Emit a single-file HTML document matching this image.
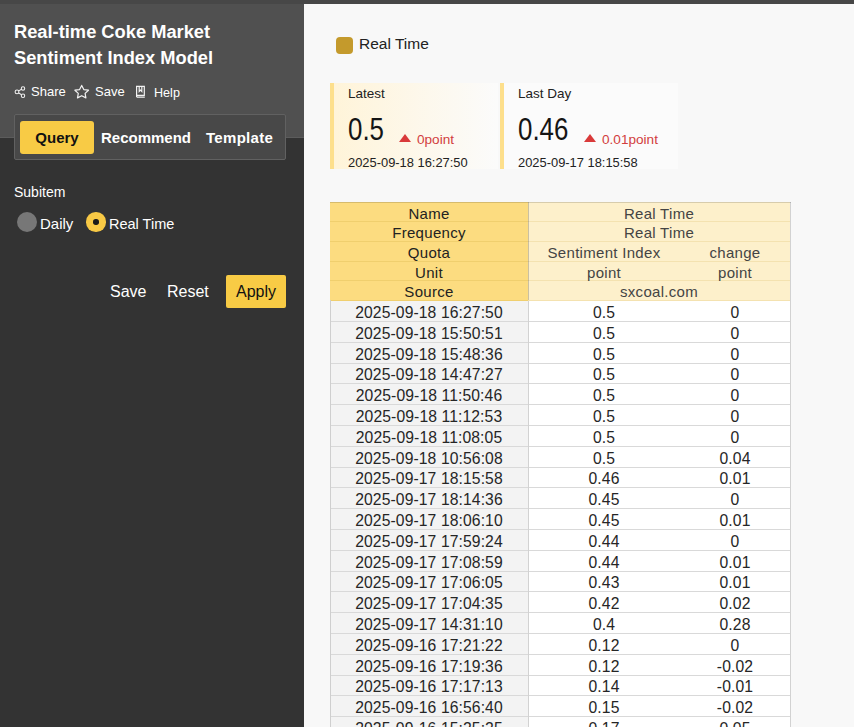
<!DOCTYPE html>
<html><head><meta charset="utf-8">
<style>
*{box-sizing:border-box;margin:0;padding:0}
html,body{width:854px;height:727px;overflow:hidden;background:#f8f8f8;font-family:"Liberation Sans",sans-serif}
#topbar{position:absolute;left:0;top:0;width:854px;height:4px;background:#474747;z-index:5}
#left{position:absolute;left:0;top:0;width:304px;height:727px;background:#333333}
#lhead{position:absolute;left:0;top:0;width:304px;height:138px;background:#505050;border-bottom:1px solid #5c5c5c}
.title{position:absolute;left:14px;top:19px;color:#fff;font-size:18.3px;font-weight:bold;line-height:26px;letter-spacing:0px}
.act{color:#fff;font-size:13px}
.acts{position:absolute;left:14px;top:84px;color:#fff;font-size:13px}
.acts span{position:absolute;white-space:nowrap}
#tabs{position:absolute;left:14px;top:114px;width:272px;height:46px;background:#484848;border:1px solid #616161;border-radius:2px}
.tab{position:absolute;top:6px;height:33px;line-height:33px;font-size:15px;font-weight:bold;color:#fff;white-space:nowrap}
.tab.q{left:5px;width:74px;background:#f8cb45;border-radius:3px;color:#111;text-align:center}
.lbl{position:absolute;color:#fff;font-size:14px;white-space:nowrap}
.btn{position:absolute;color:#fff;font-size:16px;white-space:nowrap}
.abs{position:absolute;white-space:nowrap}
.card{position:absolute;top:83px;height:86px;border-left:4px solid #fddf8c}
.c{position:absolute;text-align:center;white-space:nowrap;overflow:hidden}
.hl{position:absolute;background:#fcdc80}
.hr{position:absolute;background:#fdf0cb}
.dl{position:absolute;background:#f3f3f3}
.dr{position:absolute;background:#fff}
.hc{font-size:15px;letter-spacing:0.3px;color:#222;padding-top:1px}
.hc2{font-size:15px;letter-spacing:0.3px;color:#444;padding-top:1px}
.dc{font-size:15.7px;letter-spacing:0.1px;color:#262626;padding-top:0px}
.gl{position:absolute;height:1px}
.hlL{background:#f0cf6e}
.hlR{background:#f4e2b0}
.dg{background:#d9d9d9}
.vl{position:absolute;width:1px}

</style></head><body>
<div id="left">
  <div id="lhead">
    <div class="title">Real-time Coke Market<br>Sentiment Index Model</div>
    <svg class="abs" style="left:0;top:0" width="200" height="110" viewBox="0 0 200 110">
      <g fill="none" stroke="#f2f2f2" stroke-width="1.2">
        <circle cx="17" cy="91.9" r="1.9" stroke-width="1.05"/>
        <circle cx="23" cy="88.4" r="1.7" stroke-width="1.05"/>
        <circle cx="23" cy="95.7" r="1.7" stroke-width="1.05"/>
        <path d="M18.7 90.9 L21.5 89.3 M18.7 92.9 L21.5 94.7" stroke-width="1.05"/>
        <path d="M81.7 85.4 L83.8 89.6 L88.5 90.2 L85.1 93.4 L85.9 97.9 L81.7 95.7 L77.5 97.9 L78.3 93.4 L74.9 90.2 L79.6 89.6 Z" stroke-linejoin="round"/>
        <path d="M136.6 97.2 L144.8 97.2 M136.6 97 L136.6 86.3 L144.3 86.3 L144.3 95.3 L136.6 95.3 M139.2 86.5 L139.2 91.5 L140.5 90.2 L141.8 91.5 L141.8 86.5"/>
      </g>
    </svg>
    <div class="abs act" style="left:31px;top:84px">Share</div>
    <div class="abs act" style="left:95px;top:84px">Save</div>
    <div class="abs act" style="left:154px;top:85.5px;font-size:12.6px">Help</div>
  </div>
  <div id="tabs">
    <div class="tab q">Query</div>
    <div class="tab" style="left:86px">Recommend</div>
    <div class="tab" style="left:191px;letter-spacing:0.3px">Template</div>
  </div>
  <div class="lbl" style="left:14px;top:184px">Subitem</div>
  <div class="abs" style="left:17px;top:212px;width:20px;height:20px;border-radius:50%;background:#777"></div>
  <div class="abs" style="left:86px;top:212px;width:19.5px;height:19.5px;border-radius:50%;background:#f8c945"></div>
  <div class="abs" style="left:93px;top:219px;width:5.5px;height:5.5px;border-radius:50%;background:#1a1a1a"></div>
  <div class="lbl" style="left:40px;top:215px;font-size:15px">Daily</div>
  <div class="lbl" style="left:109px;top:216px;font-size:14.5px">Real Time</div>
  <div class="btn" style="left:110px;top:283px">Save</div>
  <div class="btn" style="left:167px;top:283px">Reset</div>
  <div class="btn" style="left:226px;top:275px;width:60px;height:33px;line-height:33px;background:#f8cb45;color:#111;text-align:center;border-radius:2px">Apply</div>
</div>

<div class="abs" style="left:335.5px;top:36.5px;width:17.5px;height:17.5px;background:#c49a2c;border-radius:4px"></div>
<div class="abs" style="left:359px;top:34.5px;font-size:15.5px;color:#222">Real Time</div>
<div class="card" style="left:330px;width:168px;background:linear-gradient(90deg,#fff4d9,#fbfbfb)">
  <div class="abs" style="left:14px;top:3px;font-size:13.5px;color:#222">Latest</div>
  <div class="abs" style="left:14px;top:29px;font-size:31px;color:#151515;transform:scaleX(0.835);transform-origin:0 0">0.5</div>
  <div class="abs" style="left:65px;top:51px;width:0;height:0;border-left:6px solid transparent;border-right:6px solid transparent;border-bottom:8px solid #d93a3a"></div>
  <div class="abs" style="left:83px;top:49px;font-size:13.6px;color:#d23e3e">0point</div>
  <div class="abs" style="left:14px;top:72px;font-size:12.9px;color:#222">2025-09-18 16:27:50</div>
</div>
<div class="card" style="left:500px;width:178px;background:#fbfbfb">
  <div class="abs" style="left:14px;top:3px;font-size:13.5px;color:#222">Last Day</div>
  <div class="abs" style="left:14px;top:29px;font-size:31px;color:#151515;transform:scaleX(0.835);transform-origin:0 0">0.46</div>
  <div class="abs" style="left:80px;top:51px;width:0;height:0;border-left:6px solid transparent;border-right:6px solid transparent;border-bottom:8px solid #d93a3a"></div>
  <div class="abs" style="left:98px;top:49px;font-size:13.6px;color:#d23e3e">0.01point</div>
  <div class="abs" style="left:14px;top:72px;font-size:12.9px;color:#222">2025-09-17 18:15:58</div>
</div>

<div class="hl" style="left:330px;top:202px;width:198px;height:98px"></div>
<div class="hr" style="left:528px;top:202px;width:262px;height:98px"></div>
<div class="dl" style="left:330px;top:300px;width:198px;height:427px"></div>
<div class="dr" style="left:528px;top:300px;width:262px;height:427px"></div>
<div class="gl hlL" style="left:330px;top:221px;width:198px"></div>
<div class="gl hlR" style="left:528px;top:221px;width:262px"></div>
<div class="c hc" style="left:330px;top:203.00px;width:198px;height:19px;line-height:19px">Name</div>
<div class="c hc2" style="left:528px;top:203.00px;width:262px;height:19px;line-height:19px">Real Time</div>
<div class="gl hlL" style="left:330px;top:241px;width:198px"></div>
<div class="gl hlR" style="left:528px;top:241px;width:262px"></div>
<div class="c hc" style="left:330px;top:222.00px;width:198px;height:20px;line-height:20px">Frequency</div>
<div class="c hc2" style="left:528px;top:222.00px;width:262px;height:20px;line-height:20px">Real Time</div>
<div class="gl hlL" style="left:330px;top:261px;width:198px"></div>
<div class="gl hlR" style="left:528px;top:261px;width:262px"></div>
<div class="c hc" style="left:330px;top:242.00px;width:198px;height:20px;line-height:20px">Quota</div>
<div class="c hc2" style="left:528px;top:242.00px;width:152px;height:20px;line-height:20px">Sentiment Index</div>
<div class="c hc2" style="left:680px;top:242.00px;width:110px;height:20px;line-height:20px">change</div>
<div class="gl hlL" style="left:330px;top:280px;width:198px"></div>
<div class="gl hlR" style="left:528px;top:280px;width:262px"></div>
<div class="c hc" style="left:330px;top:262.00px;width:198px;height:19px;line-height:19px">Unit</div>
<div class="c hc2" style="left:528px;top:262.00px;width:152px;height:19px;line-height:19px">point</div>
<div class="c hc2" style="left:680px;top:262.00px;width:110px;height:19px;line-height:19px">point</div>
<div class="gl hlL" style="left:330px;top:300px;width:198px"></div>
<div class="gl hlR" style="left:528px;top:300px;width:262px"></div>
<div class="c hc" style="left:330px;top:281.00px;width:198px;height:20px;line-height:20px">Source</div>
<div class="c hc2" style="left:528px;top:281.00px;width:262px;height:20px;line-height:20px">sxcoal.com</div>
<div class="gl dg" style="left:330px;top:321px;width:460px"></div>
<div class="c dc" style="left:330px;top:301.50px;width:198px;height:21px;line-height:21px">2025-09-18 16:27:50</div>
<div class="c dc" style="left:528px;top:301.50px;width:152px;height:21px;line-height:21px">0.5</div>
<div class="c dc" style="left:680px;top:301.50px;width:110px;height:21px;line-height:21px">0</div>
<div class="gl dg" style="left:330px;top:342px;width:460px"></div>
<div class="c dc" style="left:330px;top:322.50px;width:198px;height:21px;line-height:21px">2025-09-18 15:50:51</div>
<div class="c dc" style="left:528px;top:322.50px;width:152px;height:21px;line-height:21px">0.5</div>
<div class="c dc" style="left:680px;top:322.50px;width:110px;height:21px;line-height:21px">0</div>
<div class="gl dg" style="left:330px;top:363px;width:460px"></div>
<div class="c dc" style="left:330px;top:343.50px;width:198px;height:21px;line-height:21px">2025-09-18 15:48:36</div>
<div class="c dc" style="left:528px;top:343.50px;width:152px;height:21px;line-height:21px">0.5</div>
<div class="c dc" style="left:680px;top:343.50px;width:110px;height:21px;line-height:21px">0</div>
<div class="gl dg" style="left:330px;top:383px;width:460px"></div>
<div class="c dc" style="left:330px;top:364.50px;width:198px;height:20px;line-height:20px">2025-09-18 14:47:27</div>
<div class="c dc" style="left:528px;top:364.50px;width:152px;height:20px;line-height:20px">0.5</div>
<div class="c dc" style="left:680px;top:364.50px;width:110px;height:20px;line-height:20px">0</div>
<div class="gl dg" style="left:330px;top:404px;width:460px"></div>
<div class="c dc" style="left:330px;top:384.50px;width:198px;height:21px;line-height:21px">2025-09-18 11:50:46</div>
<div class="c dc" style="left:528px;top:384.50px;width:152px;height:21px;line-height:21px">0.5</div>
<div class="c dc" style="left:680px;top:384.50px;width:110px;height:21px;line-height:21px">0</div>
<div class="gl dg" style="left:330px;top:425px;width:460px"></div>
<div class="c dc" style="left:330px;top:405.50px;width:198px;height:21px;line-height:21px">2025-09-18 11:12:53</div>
<div class="c dc" style="left:528px;top:405.50px;width:152px;height:21px;line-height:21px">0.5</div>
<div class="c dc" style="left:680px;top:405.50px;width:110px;height:21px;line-height:21px">0</div>
<div class="gl dg" style="left:330px;top:446px;width:460px"></div>
<div class="c dc" style="left:330px;top:426.50px;width:198px;height:21px;line-height:21px">2025-09-18 11:08:05</div>
<div class="c dc" style="left:528px;top:426.50px;width:152px;height:21px;line-height:21px">0.5</div>
<div class="c dc" style="left:680px;top:426.50px;width:110px;height:21px;line-height:21px">0</div>
<div class="gl dg" style="left:330px;top:467px;width:460px"></div>
<div class="c dc" style="left:330px;top:447.50px;width:198px;height:21px;line-height:21px">2025-09-18 10:56:08</div>
<div class="c dc" style="left:528px;top:447.50px;width:152px;height:21px;line-height:21px">0.5</div>
<div class="c dc" style="left:680px;top:447.50px;width:110px;height:21px;line-height:21px">0.04</div>
<div class="gl dg" style="left:330px;top:487px;width:460px"></div>
<div class="c dc" style="left:330px;top:468.50px;width:198px;height:20px;line-height:20px">2025-09-17 18:15:58</div>
<div class="c dc" style="left:528px;top:468.50px;width:152px;height:20px;line-height:20px">0.46</div>
<div class="c dc" style="left:680px;top:468.50px;width:110px;height:20px;line-height:20px">0.01</div>
<div class="gl dg" style="left:330px;top:508px;width:460px"></div>
<div class="c dc" style="left:330px;top:488.50px;width:198px;height:21px;line-height:21px">2025-09-17 18:14:36</div>
<div class="c dc" style="left:528px;top:488.50px;width:152px;height:21px;line-height:21px">0.45</div>
<div class="c dc" style="left:680px;top:488.50px;width:110px;height:21px;line-height:21px">0</div>
<div class="gl dg" style="left:330px;top:529px;width:460px"></div>
<div class="c dc" style="left:330px;top:509.50px;width:198px;height:21px;line-height:21px">2025-09-17 18:06:10</div>
<div class="c dc" style="left:528px;top:509.50px;width:152px;height:21px;line-height:21px">0.45</div>
<div class="c dc" style="left:680px;top:509.50px;width:110px;height:21px;line-height:21px">0.01</div>
<div class="gl dg" style="left:330px;top:550px;width:460px"></div>
<div class="c dc" style="left:330px;top:530.50px;width:198px;height:21px;line-height:21px">2025-09-17 17:59:24</div>
<div class="c dc" style="left:528px;top:530.50px;width:152px;height:21px;line-height:21px">0.44</div>
<div class="c dc" style="left:680px;top:530.50px;width:110px;height:21px;line-height:21px">0</div>
<div class="gl dg" style="left:330px;top:571px;width:460px"></div>
<div class="c dc" style="left:330px;top:551.50px;width:198px;height:21px;line-height:21px">2025-09-17 17:08:59</div>
<div class="c dc" style="left:528px;top:551.50px;width:152px;height:21px;line-height:21px">0.44</div>
<div class="c dc" style="left:680px;top:551.50px;width:110px;height:21px;line-height:21px">0.01</div>
<div class="gl dg" style="left:330px;top:591px;width:460px"></div>
<div class="c dc" style="left:330px;top:572.50px;width:198px;height:20px;line-height:20px">2025-09-17 17:06:05</div>
<div class="c dc" style="left:528px;top:572.50px;width:152px;height:20px;line-height:20px">0.43</div>
<div class="c dc" style="left:680px;top:572.50px;width:110px;height:20px;line-height:20px">0.01</div>
<div class="gl dg" style="left:330px;top:612px;width:460px"></div>
<div class="c dc" style="left:330px;top:592.50px;width:198px;height:21px;line-height:21px">2025-09-17 17:04:35</div>
<div class="c dc" style="left:528px;top:592.50px;width:152px;height:21px;line-height:21px">0.42</div>
<div class="c dc" style="left:680px;top:592.50px;width:110px;height:21px;line-height:21px">0.02</div>
<div class="gl dg" style="left:330px;top:633px;width:460px"></div>
<div class="c dc" style="left:330px;top:613.50px;width:198px;height:21px;line-height:21px">2025-09-17 14:31:10</div>
<div class="c dc" style="left:528px;top:613.50px;width:152px;height:21px;line-height:21px">0.4</div>
<div class="c dc" style="left:680px;top:613.50px;width:110px;height:21px;line-height:21px">0.28</div>
<div class="gl dg" style="left:330px;top:654px;width:460px"></div>
<div class="c dc" style="left:330px;top:634.50px;width:198px;height:21px;line-height:21px">2025-09-16 17:21:22</div>
<div class="c dc" style="left:528px;top:634.50px;width:152px;height:21px;line-height:21px">0.12</div>
<div class="c dc" style="left:680px;top:634.50px;width:110px;height:21px;line-height:21px">0</div>
<div class="gl dg" style="left:330px;top:675px;width:460px"></div>
<div class="c dc" style="left:330px;top:655.50px;width:198px;height:21px;line-height:21px">2025-09-16 17:19:36</div>
<div class="c dc" style="left:528px;top:655.50px;width:152px;height:21px;line-height:21px">0.12</div>
<div class="c dc" style="left:680px;top:655.50px;width:110px;height:21px;line-height:21px">-0.02</div>
<div class="gl dg" style="left:330px;top:695px;width:460px"></div>
<div class="c dc" style="left:330px;top:676.50px;width:198px;height:20px;line-height:20px">2025-09-16 17:17:13</div>
<div class="c dc" style="left:528px;top:676.50px;width:152px;height:20px;line-height:20px">0.14</div>
<div class="c dc" style="left:680px;top:676.50px;width:110px;height:20px;line-height:20px">-0.01</div>
<div class="gl dg" style="left:330px;top:716px;width:460px"></div>
<div class="c dc" style="left:330px;top:696.50px;width:198px;height:21px;line-height:21px">2025-09-16 16:56:40</div>
<div class="c dc" style="left:528px;top:696.50px;width:152px;height:21px;line-height:21px">0.15</div>
<div class="c dc" style="left:680px;top:696.50px;width:110px;height:21px;line-height:21px">-0.02</div>
<div class="gl dg" style="left:330px;top:737px;width:460px"></div>
<div class="c dc" style="left:330px;top:717.50px;width:198px;height:21px;line-height:21px">2025-09-16 15:25:25</div>
<div class="c dc" style="left:528px;top:717.50px;width:152px;height:21px;line-height:21px">0.17</div>
<div class="c dc" style="left:680px;top:717.50px;width:110px;height:21px;line-height:21px">0.05</div>
<div class="vl" style="left:330px;top:300px;height:427px;background:#cfcfcf"></div>
<div class="vl" style="left:528px;top:202px;height:98px;background:rgba(0,0,0,0.2)"></div>
<div class="vl" style="left:528px;top:301px;height:426px;background:#d2d2d2"></div>
<div class="vl" style="left:790px;top:202px;height:525px;background:#d2d2d2"></div>
<div class="gl" style="left:330px;top:202px;width:461px;background:rgba(0,0,0,0.15)"></div>
<div id="topbar"></div>
</body></html>
